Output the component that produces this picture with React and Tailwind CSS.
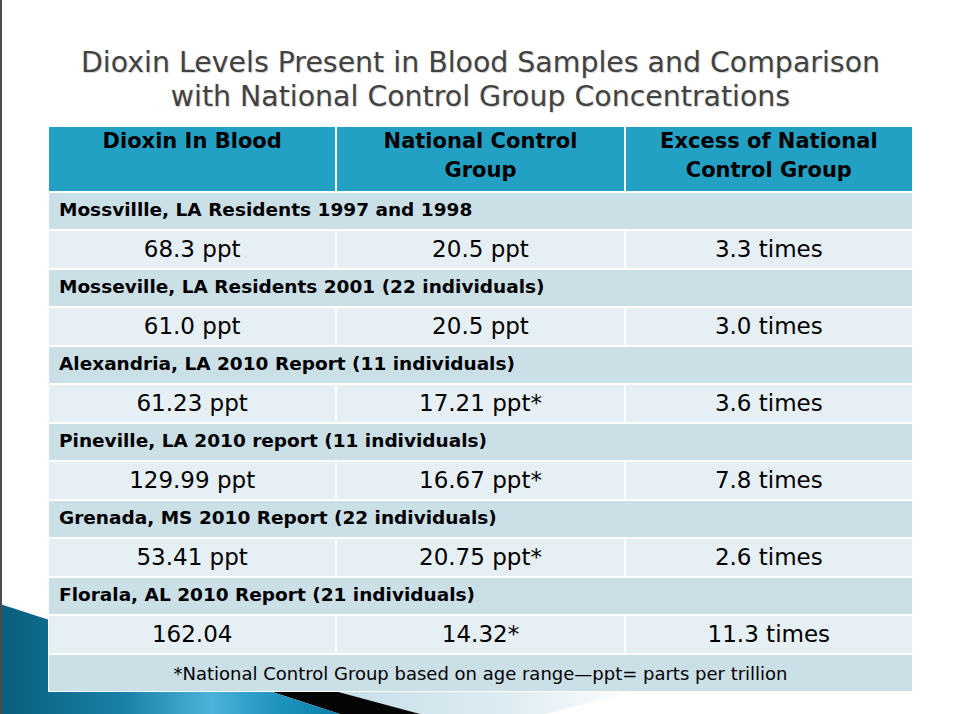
import React from "react";

const rows = [
  { label: "Mossvillle, LA Residents 1997 and 1998", values: ["68.3 ppt", "20.5 ppt", "3.3 times"] },
  { label: "Mosseville, LA Residents 2001 (22 individuals)", values: ["61.0 ppt", "20.5 ppt", "3.0 times"] },
  { label: "Alexandria, LA 2010 Report (11 individuals)", values: ["61.23 ppt", "17.21 ppt*", "3.6 times"] },
  { label: "Pineville, LA 2010 report (11 individuals)", values: ["129.99 ppt", "16.67 ppt*", "7.8 times"] },
  { label: "Grenada, MS 2010 Report (22 individuals)", values: ["53.41 ppt", "20.75 ppt*", "2.6 times"] },
  { label: "Florala, AL 2010 Report (21 individuals)", values: ["162.04", "14.32*", "11.3 times"] },
];

// decorative wedges in the lower left corner (slide theme)
const Decoration = () => (
  <svg className="absolute inset-0" width="961" height="714" viewBox="0 0 961 714">
    <defs>
      <linearGradient id="pale" gradientUnits="userSpaceOnUse" x1="330" y1="0" x2="640" y2="0">
        <stop offset="0" stopColor="#c6dee9" />
        <stop offset="0.55" stopColor="#dcebf1" />
        <stop offset="1" stopColor="#ffffff" />
      </linearGradient>
      <linearGradient id="blue" gradientUnits="userSpaceOnUse" x1="0" y1="0" x2="340" y2="0">
        <stop offset="0" stopColor="#0a5f7c" />
        <stop offset="0.35" stopColor="#177fa6" />
        <stop offset="0.62" stopColor="#4bb2d9" />
        <stop offset="0.82" stopColor="#1d93be" />
        <stop offset="1" stopColor="#0a7ea6" />
      </linearGradient>
    </defs>
    <polygon points="183,650 800,650 545,714 420,714" fill="url(#pale)" />
    <polygon points="60,617 420,714 340,714 60,623" fill="#050505" />
    <polygon points="0,604 340,714 0,714" fill="url(#blue)" />
    <rect x="0" y="0" width="2" height="714" fill="#4a4a4a" />
  </svg>
);

const App = () => {
  return (
    <div className="relative w-[961px] h-[714px] bg-white overflow-hidden font-['DejaVu_Sans',sans-serif]">
      <Decoration />

      <div className="relative flex flex-col items-center pt-[46px]">
        {/* Title */}
        <h1 className="text-[28.4px] leading-[34px] text-center text-[#424242] [text-shadow:1px_1px_1px_rgba(0,0,0,0.18)]">
          Dioxin Levels Present in Blood Samples and Comparison
          <br />
          with National Control Group Concentrations
        </h1>

        {/* Table */}
        <div className="mt-[12px] w-[865px] border border-white bg-white flex flex-col gap-[2px]">
          <div className="grid grid-cols-3 gap-x-[2px] h-[64px]">
            <div className="bg-[#22a1c4] text-center font-bold text-[21px] leading-[29px] text-black">Dioxin In Blood</div>
            <div className="bg-[#22a1c4] text-center font-bold text-[21px] leading-[29px] text-black">
              National Control
              <br />
              Group
            </div>
            <div className="bg-[#22a1c4] text-center font-bold text-[21px] leading-[29px] text-black">
              Excess of National
              <br />
              Control Group
            </div>
          </div>

          {rows.map((row, i) => (
            <React.Fragment key={i}>
              <div className="h-[36px] bg-[#cbdfe7] flex items-center pl-[10px] pb-[3px] font-bold text-[18.5px] text-black">
                {row.label}
              </div>
              <div className="grid grid-cols-3 gap-x-[2px] h-[37px]">
                {row.values.map((value, j) => (
                  <div key={j} className="bg-[#e6eff3] flex items-center justify-center text-[23px] text-black">
                    {value}
                  </div>
                ))}
              </div>
            </React.Fragment>
          ))}

          <div className="h-[36px] bg-[#cbdfe7] flex items-center justify-center text-[18px] text-black">
            *National Control Group based on age range—ppt= parts per trillion
          </div>
        </div>
      </div>
    </div>
  );
};

export default App;
